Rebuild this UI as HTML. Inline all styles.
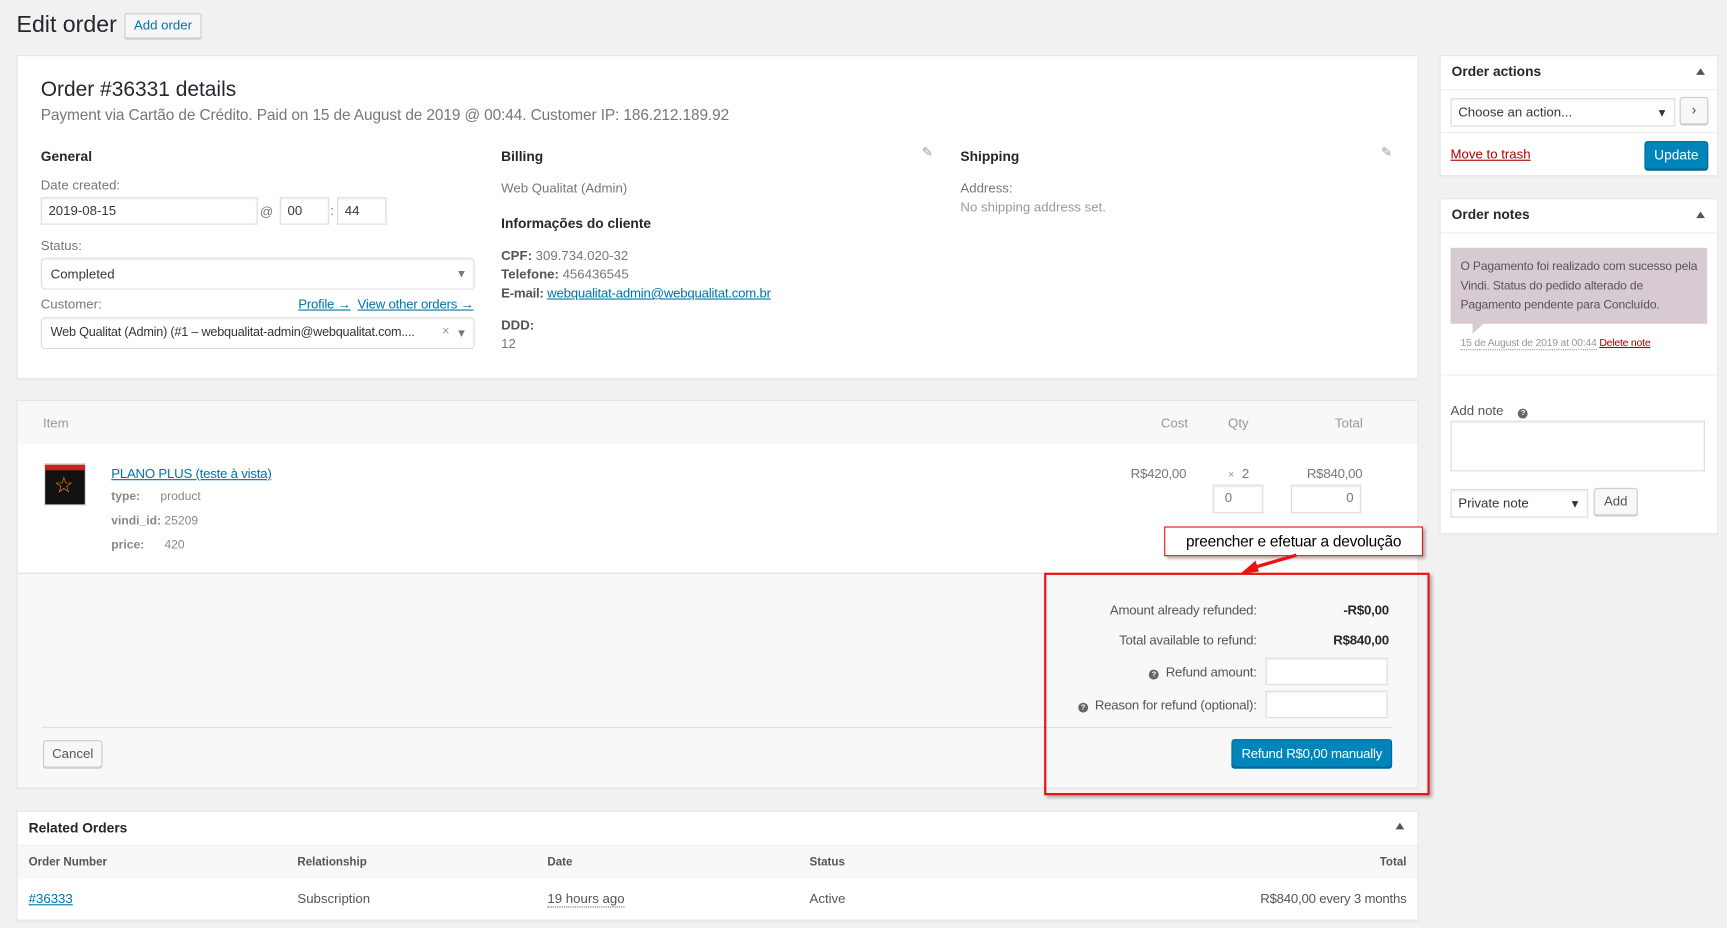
<!DOCTYPE html>
<html><head><meta charset="utf-8"><style>
html,body{margin:0;padding:0;width:1727px;height:928px;overflow:hidden;background:#f1f1f1}
#w{position:absolute;left:0;top:0;width:1568px;height:843px;transform:scale(1.10140);transform-origin:0 0;font-family:"Liberation Sans",sans-serif;font-size:12px;color:#555}
.a{position:absolute;white-space:nowrap}
.box{position:absolute;background:#fff;border:1px solid #e5e5e5;box-shadow:0 1px 1px rgba(0,0,0,.04)}
.in{position:absolute;background:#fff;border:1px solid #ddd;box-shadow:inset 0 1px 2px rgba(0,0,0,.07);box-sizing:border-box;font-size:12px;color:#32373c;padding:4px 6px}
.btn{position:absolute;background:#f7f7f7;border:1px solid #ccc;border-radius:3px;box-sizing:border-box;box-shadow:0 1px 0 #ccc;font-size:12px;color:#555;text-align:center}
.blue{background:#0085ba;border-color:#0073aa #006799 #006799;color:#fff;box-shadow:0 1px 0 #006799}
.lnk{color:#0073aa;text-decoration:underline}
.h{font-weight:bold;color:#23282d;font-size:12.5px}
.dd{position:absolute;right:8px;top:8px;width:0;height:0;border-left:3.5px solid transparent;border-right:3.5px solid transparent;border-top:6px solid #777}
.q{display:inline-block;width:9px;height:9px;border-radius:50%;background:#666;color:#fff;font-size:7px;line-height:9px;text-align:center;font-weight:bold;vertical-align:0}
.n{letter-spacing:-0.2px}
</style></head><body><div id="w">

<div class="a" style="left:15px;top:11px;font-size:21px;color:#23282d">Edit order</div>
<div class="btn" style="left:113px;top:12px;width:70px;height:23px;line-height:21px;color:#0073aa;border-radius:2px">Add order</div>

<div class="box" style="left:15px;top:50px;width:1271px;height:292px"></div>
<div class="a" style="left:37px;top:71px;font-size:19px;color:#23282d">Order #36331 details</div>
<div class="a" style="left:37px;top:96px;font-size:14px;color:#777;letter-spacing:-0.1px">Payment via Cartão de Crédito. Paid on 15 de August de 2019 @ 00:44. Customer IP: 186.212.189.92</div>

<div class="a h" style="left:37px;top:135px">General</div>
<div class="a" style="left:37px;top:161px;color:#777">Date created:</div>
<div class="in" style="left:37px;top:179px;width:197px;height:25px">2019-08-15</div>
<div class="a" style="left:236px;top:185px;color:#777">@</div>
<div class="in" style="left:254px;top:179px;width:45px;height:25px">00</div>
<div class="a" style="left:300px;top:184px;color:#777">:</div>
<div class="in" style="left:306px;top:179px;width:45px;height:25px">44</div>
<div class="a" style="left:37px;top:216px;color:#777">Status:</div>
<div class="in" style="left:37px;top:234px;width:394px;height:29px;padding:7px 8px;border-radius:4px;border-color:#ddd">Completed<span class="dd" style="top:11px"></span></div>
<div class="a" style="left:37px;top:269px;color:#777">Customer:</div>
<div class="a n" style="right:1138px;top:269px"><span class="lnk">Profile →</span>&nbsp; <span class="lnk">View other orders →</span></div>
<div class="in n" style="left:37px;top:288px;width:394px;height:29px;padding:7px 8px;border-radius:4px;font-size:11.5px">Web Qualitat (Admin) (#1 – webqualitat-admin@webqualitat.com....<span style="position:absolute;right:22px;top:6px;color:#999">×</span><span class="dd" style="top:11px"></span></div>

<div class="a h" style="left:455px;top:135px">Billing</div>
<div class="a" style="left:837px;top:131px;color:#999;font-size:12px">✎</div>
<div class="a" style="left:455px;top:164px;color:#777">Web Qualitat (Admin)</div>
<div class="a h" style="left:455px;top:196px">Informações do cliente</div>
<div class="a" style="left:455px;top:225px;color:#777"><b style="color:#555">CPF:</b> 309.734.020-32</div>
<div class="a" style="left:455px;top:242px;color:#777"><b style="color:#555">Telefone:</b> 456436545</div>
<div class="a n" style="left:455px;top:259px;color:#777"><b style="color:#555">E-mail:</b> <span class="lnk">webqualitat-admin@webqualitat.com.br</span></div>
<div class="a" style="left:455px;top:288px"><b>DDD:</b></div>
<div class="a" style="left:455px;top:305px;color:#777">12</div>

<div class="a h" style="left:872px;top:135px">Shipping</div>
<div class="a" style="left:1254px;top:131px;color:#999">✎</div>
<div class="a" style="left:872px;top:164px;color:#777">Address:</div>
<div class="a" style="left:872px;top:181px;color:#999">No shipping address set.</div>

<!-- items -->
<div class="box" style="left:15px;top:363px;width:1271px;height:351px;background:#f8f8f8"></div>
<div class="a" style="left:16px;top:403px;width:1271px;height:117px;background:#fff;border-bottom:1px solid #dfdfdf"></div>
<div class="a" style="left:39px;top:377px;color:#999">Item</div>
<div class="a" style="left:1054px;top:377px;color:#999">Cost</div>
<div class="a" style="left:1115px;top:377px;color:#999">Qty</div>
<div class="a" style="left:1212px;top:377px;color:#999">Total</div>
<div class="a" style="left:40px;top:421px;width:36px;height:36px;background:#111;border:1px solid #eee">
<div style="height:5px;background:#c22"></div>
<div style="position:absolute;left:8px;top:6px;color:#f80;font-size:20px">☆</div></div>
<div class="a lnk n" style="left:101px;top:423px">PLANO PLUS (teste à vista)</div>
<div class="a" style="left:101px;top:445px;color:#888;font-size:11px"><b>type:</b>&nbsp;&nbsp;&nbsp;&nbsp;&nbsp; product</div>
<div class="a" style="left:101px;top:467px;color:#888;font-size:11px"><b>vindi_id:</b> 25209</div>
<div class="a" style="left:101px;top:489px;color:#888;font-size:11px"><b>price:</b>&nbsp;&nbsp;&nbsp;&nbsp;&nbsp; 420</div>
<div class="a n" style="right:491px;top:423px;color:#777">R$420,00</div>
<div class="a" style="left:1115px;top:423px;color:#777"><span style="color:#999;font-size:10px">×</span>&nbsp; 2</div>
<div class="a n" style="right:331px;top:423px;color:#777">R$840,00</div>
<div class="in" style="left:1101px;top:440px;width:46px;height:26px;color:#777;padding:4px 10px">0</div>
<div class="in" style="left:1172px;top:440px;width:64px;height:26px;color:#777;text-align:right">0</div>

<div class="a n" style="right:427px;top:547px;color:#555">Amount already refunded:</div>
<div class="a n" style="right:307px;top:547px;font-weight:bold;color:#23282d">-R$0,00</div>
<div class="a n" style="right:427px;top:574px">Total available to refund:</div>
<div class="a n" style="right:307px;top:574px;font-weight:bold;color:#23282d">R$840,00</div>
<div class="a n" style="right:427px;top:603px"><span class="q">?</span>&nbsp; Refund amount:</div>
<div class="a n" style="right:427px;top:633px"><span class="q">?</span>&nbsp; Reason for refund (optional):</div>
<div class="in" style="left:1149px;top:597px;width:111px;height:25px"></div>
<div class="in" style="left:1149px;top:627px;width:111px;height:25px"></div>
<div class="a" style="left:38px;top:660px;width:1226px;height:1px;background:#dfdfdf"></div>
<div class="btn" style="left:39px;top:672px;width:54px;height:25px;line-height:23px">Cancel</div>
<div class="btn blue n" style="left:1118px;top:671px;width:146px;height:26px;line-height:24px">Refund R$0,00 manually</div>

<!-- annotation -->
<div class="a" style="left:948px;top:520px;width:346px;height:198px;border:2px solid #e11;box-shadow:2px 2px 3px rgba(0,0,0,.3)"></div>
<div class="a" style="left:1057px;top:478px;width:233px;height:25px;background:#fff;border:1px solid #e11;box-shadow:2px 2px 3px rgba(0,0,0,.35);font-size:14px;color:#000;text-align:center;line-height:25px;letter-spacing:-0.2px">preencher e efetuar a devolução</div>
<svg class="a" style="left:1110px;top:500px" width="80" height="30"><line x1="67" y1="4" x2="26" y2="16" stroke="#e11" stroke-width="3"/><polygon points="16,21 30,9 33,19" fill="#e11"/></svg>

<!-- related -->
<div class="box" style="left:15px;top:736px;width:1271px;height:98px"></div>
<div class="a h" style="left:26px;top:745px">Related Orders</div>
<div class="a" style="left:1267px;top:747px;width:0;height:0;border-left:4px solid transparent;border-right:4px solid transparent;border-bottom:6px solid #555"></div>
<div class="a" style="left:16px;top:767px;width:1271px;height:30px;background:#f8f8f8;border-top:1px solid #eee"></div>
<div class="a" style="left:26px;top:777px;font-size:10.5px;font-weight:bold;color:#555">Order Number</div>
<div class="a" style="left:270px;top:777px;font-size:10.5px;font-weight:bold;color:#555">Relationship</div>
<div class="a" style="left:497px;top:777px;font-size:10.5px;font-weight:bold;color:#555">Date</div>
<div class="a" style="left:735px;top:777px;font-size:10.5px;font-weight:bold;color:#555">Status</div>
<div class="a" style="right:291px;top:777px;font-size:10.5px;font-weight:bold;color:#555">Total</div>
<div class="a lnk" style="left:26px;top:809px">#36333</div>
<div class="a" style="left:270px;top:809px">Subscription</div>
<div class="a" style="left:497px;top:809px;border-bottom:1px dotted #555">19 hours ago</div>
<div class="a" style="left:735px;top:809px">Active</div>
<div class="a n" style="right:291px;top:809px">R$840,00 every 3 months</div>

<!-- sidebar -->
<div class="box" style="left:1307px;top:50px;width:251px;height:108px"></div>
<div class="a h" style="left:1318px;top:58px">Order actions</div>
<div class="a" style="left:1540px;top:62px;width:0;height:0;border-left:4px solid transparent;border-right:4px solid transparent;border-bottom:6px solid #555"></div>
<div class="a" style="left:1308px;top:81px;width:251px;height:1px;background:#eee"></div>
<div class="in" style="left:1317px;top:89px;width:204px;height:26px;padding:5px 6px">Choose an action...<span class="dd" style="top:10px;border-top-color:#333"></span></div>
<div class="btn" style="left:1525px;top:88px;width:26px;height:25px;line-height:22px;font-size:13px">›</div>
<div class="a" style="left:1308px;top:120px;width:251px;height:1px;background:#eee"></div>
<div class="a" style="left:1317px;top:133px;color:#a00;text-decoration:underline">Move to trash</div>
<div class="btn blue" style="left:1493px;top:128px;width:58px;height:26px;line-height:24px;font-size:12.5px">Update</div>

<div class="box" style="left:1307px;top:180px;width:251px;height:303px"></div>
<div class="a h" style="left:1318px;top:188px">Order notes</div>
<div class="a" style="left:1540px;top:192px;width:0;height:0;border-left:4px solid transparent;border-right:4px solid transparent;border-bottom:6px solid #555"></div>
<div class="a" style="left:1308px;top:211px;width:251px;height:1px;background:#eee"></div>
<div class="a" style="left:1317px;top:225px;width:216px;height:52px;padding:9px 8px 8px 9px;background:#d7cad2;white-space:normal;line-height:17.5px;font-size:11px;color:#555;letter-spacing:-0.15px">O Pagamento foi realizado com sucesso pela Vindi. Status do pedido alterado de Pagamento pendente para Concluído.</div>
<div class="a" style="left:1337px;top:294px;width:0;height:0;border-right:10px solid transparent;border-top:9px solid #d7cad2"></div>
<div class="a n" style="left:1326px;top:306px;font-size:9.5px;color:#999"><span style="border-bottom:1px dotted #999">15 de August de 2019 at 00:44</span> <span style="color:#a00;text-decoration:underline">Delete note</span></div>
<div class="a" style="left:1308px;top:340px;width:251px;height:1px;background:#eee"></div>
<div class="a" style="left:1317px;top:366px">Add note &nbsp;&nbsp;&nbsp;<span class="q">?</span></div>
<div class="in" style="left:1317px;top:382px;width:231px;height:46px"></div>
<div class="in" style="left:1317px;top:444px;width:125px;height:26px;padding:5px 6px">Private note<span class="dd" style="top:10px;border-top-color:#333"></span></div>
<div class="btn" style="left:1447px;top:443px;width:40px;height:25px;line-height:23px">Add</div>

</div></body></html>
